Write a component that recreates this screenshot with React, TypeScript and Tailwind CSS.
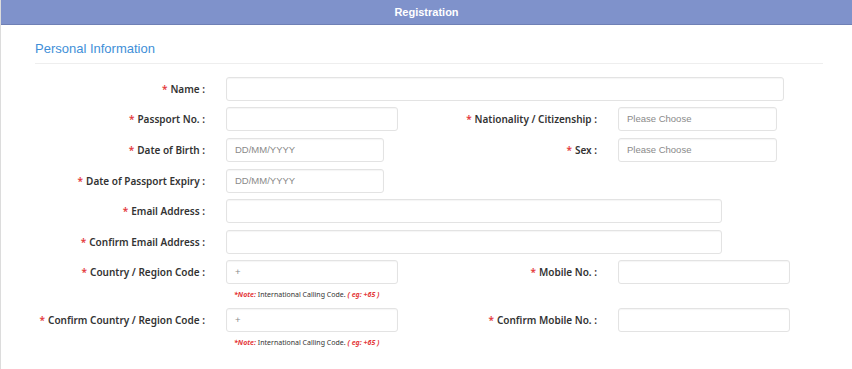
import React from 'react';

const labelFont = { fontFamily: '"Noto Sans", "Liberation Sans", sans-serif' };

function Label({ text, className = '' }: { text: string; className?: string }) {
  return (
    <div
      className={`flex h-[24px] shrink-0 items-center justify-end text-[10px] font-semibold text-[#333] ${className}`}
      style={labelFont}
    >
      <span className="mr-[3px] text-[#e4393c]">*</span>
      {text} :
    </div>
  );
}

function Input({ className = '', placeholder = '' }: { className?: string; placeholder?: string }) {
  return (
    <div
      className={`flex h-[24px] items-center rounded-[3px] border border-[#e3e3e3] bg-white px-[8px] font-['Liberation_Sans',Arial,sans-serif] text-[9.5px] text-[#8a8a8a] shadow-[inset_0_1px_1px_rgba(0,0,0,0.04)] ${className}`}
    >
      {placeholder}
    </div>
  );
}

function Note() {
  return (
    <div className="mt-[6px] pl-[8px] font-['Noto_Sans',sans-serif] text-[7px] leading-[10px] text-[#333]">
      <span className="font-bold italic text-[#e4393c]">*Note:</span> International Calling Code.{' '}
      <span className="font-bold italic text-[#e4393c]">( eg: +65 )</span>
    </div>
  );
}

export default function App() {
  return (
    <div className="min-h-[369px] w-[852px] border-l border-[#dcdcdc] bg-white">
      {/* header */}
      <div className="flex h-[25px] items-center justify-center border-b border-[#6f80b5] bg-[#7f92cb] font-['Liberation_Sans',Arial,sans-serif] text-[11px] font-bold text-white">
        Registration
      </div>

      <div className="ml-[34px] mr-[29px]">
        <div className="mt-[16px] font-['Liberation_Sans',Arial,sans-serif] text-[13px] leading-[16px] text-[#3f8fd8]">
          Personal Information
        </div>
        <div className="mt-[6px] border-b border-[#eeeeee]" />
      </div>

      <div className="mt-[13px]">
        <div className="flex items-start">
          <Label text="Name" className="w-[204px]" />
          <Input className="ml-[21px] w-[558px]" />
        </div>

        <div className="mt-[6px] flex items-start">
          <Label text="Passport No." className="w-[204px]" />
          <div className="ml-[21px] w-[172px]">
            <Input className="w-[172px]" />
          </div>
          <Label text="Nationality / Citizenship" className="w-[199px]" />
          <Input className="ml-[21px] w-[159px]" placeholder="Please Choose" />
        </div>

        <div className="mt-[7px] flex items-start">
          <Label text="Date of Birth" className="w-[204px]" />
          <div className="ml-[21px] w-[172px]">
            <Input className="w-[158px]" placeholder="DD/MM/YYYY" />
          </div>
          <Label text="Sex" className="w-[199px]" />
          <Input className="ml-[21px] w-[159px]" placeholder="Please Choose" />
        </div>

        <div className="mt-[7px] flex items-start">
          <Label text="Date of Passport Expiry" className="w-[204px]" />
          <div className="ml-[21px] w-[172px]">
            <Input className="w-[158px]" placeholder="DD/MM/YYYY" />
          </div>
        </div>

        <div className="mt-[6px] flex items-start">
          <Label text="Email Address" className="w-[204px]" />
          <Input className="ml-[21px] w-[496px]" />
        </div>

        <div className="mt-[7px] flex items-start">
          <Label text="Confirm Email Address" className="w-[204px]" />
          <Input className="ml-[21px] w-[496px]" />
        </div>

        <div className="mt-[6px] flex items-start">
          <Label text="Country / Region Code" className="w-[204px]" />
          <div className="ml-[21px] w-[172px]">
            <Input className="w-[172px]" placeholder="+" />
            <Note />
          </div>
          <Label text="Mobile No." className="w-[199px]" />
          <Input className="ml-[21px] w-[172px]" />
        </div>

        <div className="mt-[8px] flex items-start">
          <Label text="Confirm Country / Region Code" className="w-[204px]" />
          <div className="ml-[21px] w-[172px]">
            <Input className="w-[172px]" placeholder="+" />
            <Note />
          </div>
          <Label text="Confirm Mobile No." className="w-[199px]" />
          <Input className="ml-[21px] w-[172px]" />
        </div>
      </div>
    </div>
  );
}
